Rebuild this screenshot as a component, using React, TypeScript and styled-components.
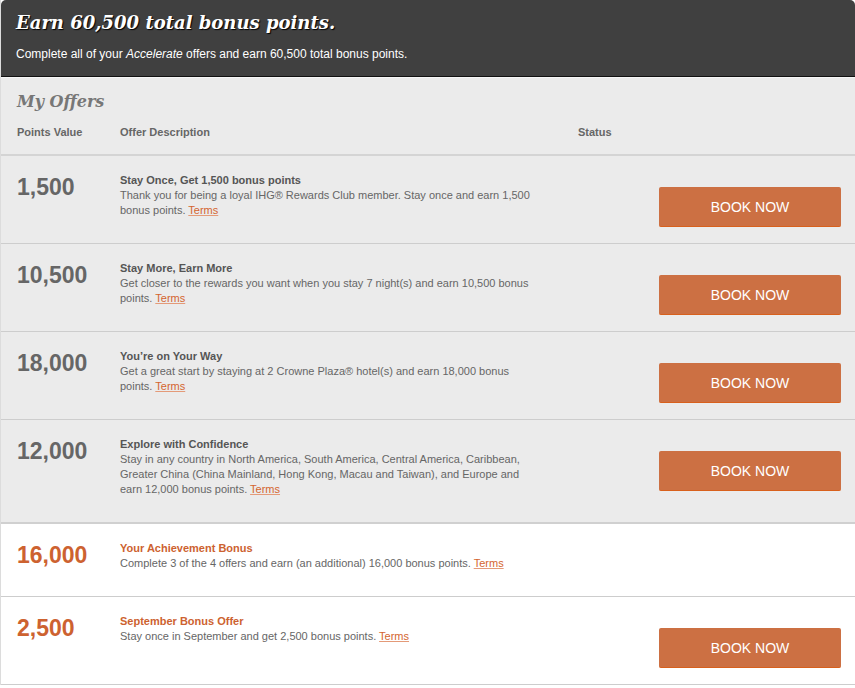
import React from 'react';
import styled, { createGlobalStyle } from 'styled-components';

interface Offer {
    points: string;
    title: string;
    text: string;
    bonus?: boolean;
    bookable: boolean;
}

const offers: Offer[] = [
    {
        points: '1,500',
        title: 'Stay Once, Get 1,500 bonus points',
        text: 'Thank you for being a loyal IHG® Rewards Club member. Stay once and earn 1,500 bonus points.',
        bookable: true,
    },
    {
        points: '10,500',
        title: 'Stay More, Earn More',
        text: 'Get closer to the rewards you want when you stay 7 night(s) and earn 10,500 bonus points.',
        bookable: true,
    },
    {
        points: '18,000',
        title: 'You’re on Your Way',
        text: 'Get a great start by staying at 2 Crowne Plaza® hotel(s) and earn 18,000 bonus points.',
        bookable: true,
    },
    {
        points: '12,000',
        title: 'Explore with Confidence',
        text: 'Stay in any country in North America, South America, Central America, Caribbean, Greater China (China Mainland, Hong Kong, Macau and Taiwan), and Europe and earn 12,000 bonus points.',
        bookable: true,
    },
    {
        points: '16,000',
        title: 'Your Achievement Bonus',
        text: 'Complete 3 of the 4 offers and earn (an additional) 16,000 bonus points.',
        bonus: true,
        bookable: false,
    },
    {
        points: '2,500',
        title: 'September Bonus Offer',
        text: 'Stay once in September and get 2,500 bonus points.',
        bonus: true,
        bookable: true,
    },
];

const App: React.FC = () => {
    return (
        <>
            <GlobalStyle />
            <Panel>
                <Banner>
                    <BannerTitle>Earn 60,500 total bonus points.</BannerTitle>
                    <BannerText>
                        Complete all of your <em>Accelerate</em> offers and earn 60,500 total bonus points.
                    </BannerText>
                </Banner>

                <OffersHead>
                    <Heading>My Offers</Heading>
                    <Columns>
                        <ColumnLabel>Points Value</ColumnLabel>
                        <ColumnLabel>Offer Description</ColumnLabel>
                        <ColumnLabel>Status</ColumnLabel>
                    </Columns>
                </OffersHead>

                {offers.map((offer, key) =>
                    <Row key={key} bonus={offer.bonus} lastGray={key === 3}>
                        <Points bonus={offer.bonus}>{offer.points}</Points>
                        <Description>
                            <OfferTitle bonus={offer.bonus}>{offer.title}</OfferTitle>
                            <OfferText>
                                {offer.text} <Terms href="#">Terms</Terms>
                            </OfferText>
                        </Description>
                        {offer.bookable && <BookButton type="button">BOOK NOW</BookButton>}
                    </Row>
                )}
            </Panel>
        </>
    );
};

const GlobalStyle = createGlobalStyle`
    body {
        margin: 0;
        background: #ffffff;
        font-family: "Liberation Sans", Arial, sans-serif;
    }
`;

const Panel = styled.div`
    width: 855px;
    box-sizing: border-box;
    border-left: 1px solid #dcdcdc;
`;

const Banner = styled.header`
    background: #404040;
    border-radius: 5px 5px 0 0;
    border-bottom: 1px solid #111111;
    padding: 10px 15px 14px;
    color: #ffffff;
`;

const BannerTitle = styled.h1`
    margin: 0;
    font-family: "DejaVu Serif", Georgia, serif;
    font-style: italic;
    font-weight: bold;
    font-size: 18px;
    line-height: 26px;
    text-shadow: 1px 1px 1px #000000;
`;

const BannerText = styled.p`
    margin: 10px 0 0;
    font-size: 12px;
    line-height: 16px;

    em {
        font-style: italic;
    }
`;

const OffersHead = styled.div`
    background: #ebebeb;
    border-top: 1px solid #f6f6f6;
    border-bottom: 2px solid #d4d4d4;
    padding: 13px 15px 14px 16px;
`;

const Heading = styled.h2`
    margin: 0;
    font-family: "DejaVu Serif", Georgia, serif;
    font-style: italic;
    font-weight: bold;
    font-size: 16px;
    line-height: 22px;
    color: #777777;
`;

const Columns = styled.div`
    display: grid;
    grid-template-columns: 103px 458px 1fr;
    margin-top: 12px;
`;

const ColumnLabel = styled.span`
    font-size: 11px;
    font-weight: bold;
    line-height: 15px;
    color: #666666;
`;

const Row = styled.div<{ bonus?: boolean; lastGray?: boolean }>`
    display: grid;
    grid-template-columns: 103px 458px 1fr;
    align-items: start;
    padding: 17px 14px 16px 16px;
    background: ${p => p.bonus ? '#ffffff' : '#ebebeb'};
    border-bottom: ${p => p.lastGray ? '2px solid #d0d0d0' : '1px solid #cdcdcd'};
`;

const Points = styled.div<{ bonus?: boolean }>`
    margin-top: 3px;
    font-size: 23px;
    font-weight: bold;
    line-height: 23px;
    color: ${p => p.bonus ? '#cd6230' : '#666666'};
`;

const Description = styled.div`
    max-width: 420px;
    padding-bottom: 9px;
    font-size: 11px;
    line-height: 15px;
`;

const OfferTitle = styled.div<{ bonus?: boolean }>`
    font-weight: bold;
    color: ${p => p.bonus ? '#cd6230' : '#555555'};
`;

const OfferText = styled.div`
    color: #666666;
`;

const Terms = styled.a`
    color: #d4652f;
    text-decoration: underline;
    text-decoration-color: #e49a78;
`;

const BookButton = styled.button`
    justify-self: end;
    width: 182px;
    height: 40px;
    margin-top: 14px;
    border: none;
    border-bottom: 1px solid #d8601c;
    border-radius: 2px;
    background: #cc7043;
    color: #ffffff;
    font-family: "Liberation Sans", Arial, sans-serif;
    font-size: 14px;
    cursor: pointer;
`;

export default App;
